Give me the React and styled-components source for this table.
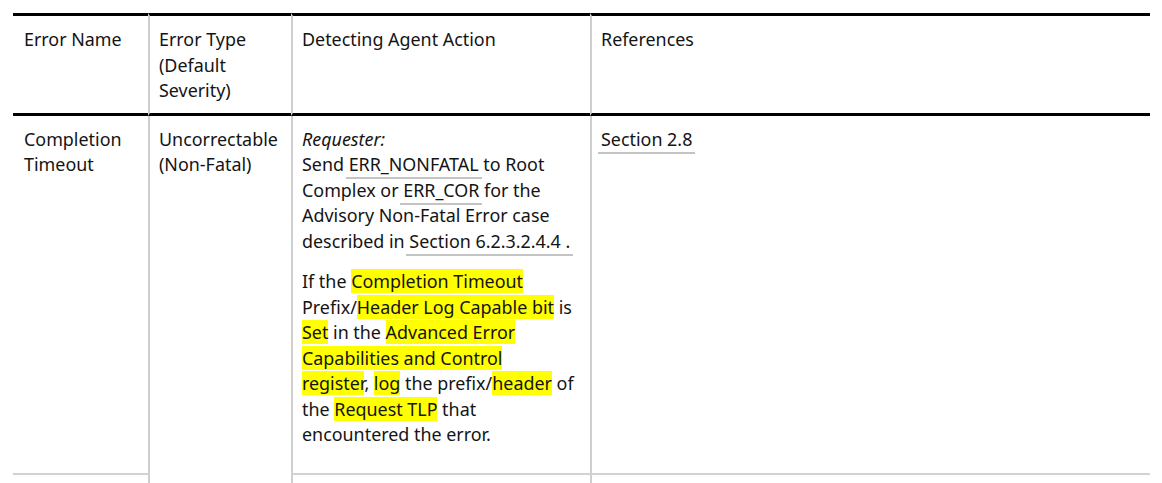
import React from 'react';
import styled, { createGlobalStyle } from 'styled-components';

const GlobalStyle = createGlobalStyle`
  body {
    margin: 0;
    background: #fff;
    overflow: hidden;
    font-family: "Noto Sans", "Liberation Sans", sans-serif;
  }
`;

const Page = styled.div`
  padding: 13px 12px 0 13px;
`;

const Table = styled.table`
  width: 1137px;
  table-layout: fixed;
  border-collapse: separate;
  border-spacing: 0;
  color: #141414;
  font-size: 17.9px;
  line-height: 25.5px;
`;

const HeadCell = styled.th`
  text-align: left;
  vertical-align: top;
  font-weight: normal;
  padding: 11px 10px 9px ${props => (props.first ? '11px' : '9px')};
  border-top: 3px solid #000;
  border-bottom: 3px solid #000;
  border-left: ${props => (props.first ? 'none' : '2px solid #cfcfcf')};
`;

const Cell = styled.td`
  vertical-align: top;
  padding: 11px 10px 10px ${props => (props.first ? '11px' : '9px')};
  border-bottom: ${props => (props.open ? 'none' : '2px solid #d2d2d2')};
  border-left: ${props => (props.first ? 'none' : '2px solid #cfcfcf')};
  height: ${props => props.h || 'auto'};
`;

const Para = styled.p`
  margin: 0 0 15px;
`;

const Role = styled.em`
  font-style: italic;
`;

const Ref = styled.span`
  position: relative;
  white-space: nowrap;

  &::after {
    content: '';
    position: absolute;
    left: -3px;
    right: -3px;
    bottom: -3px;
    height: 2px;
    background: #c4c4c4;
  }
`;

const Mark = styled.span`
  background: #ffff00;
`;

const columns = [
  { label: 'Error Name', width: 135 },
  { label: 'Error Type (Default Severity)', width: 143 },
  { label: 'Detecting Agent Action', width: 299 },
  { label: 'References', width: 560 },
];

const App = () => (
  <Page>
    <GlobalStyle />
    <Table>
      <colgroup>
        {columns.map(col => (
          <col key={col.label} style={{ width: col.width }} />
        ))}
      </colgroup>
      <thead>
        <tr>
          {columns.map((col, i) => (
            <HeadCell key={col.label} first={i === 0}>
              {col.label}
            </HeadCell>
          ))}
        </tr>
      </thead>
      <tbody>
        <tr>
          <Cell first>Completion Timeout</Cell>
          <Cell rowSpan={2} open>Uncorrectable (Non-Fatal)</Cell>
          <Cell>
            <Para>
              <Role>Requester:</Role>
              <br />
              Send <Ref>ERR_NONFATAL</Ref> to Root
              <br />
              Complex or <Ref>ERR_COR</Ref> for the
              <br />
              Advisory Non-Fatal Error case
              <br />
              described in <Ref>Section 6.2.3.2.4.4&nbsp;.</Ref>
            </Para>
            <Para>
              If the <Mark>Completion Timeout</Mark>
              <br />
              Prefix/<Mark>Header Log Capable bit</Mark> is
              <br />
              <Mark>Set</Mark> in the <Mark>Advanced Error</Mark>
              <br />
              <Mark>Capabilities and Control</Mark>
              <br />
              <Mark>register</Mark>, <Mark>log</Mark> the prefix/<Mark>header</Mark> of
              <br />
              the <Mark>Request TLP</Mark> that
              <br />
              encountered the error.
            </Para>
          </Cell>
          <Cell>
            <Ref>Section 2.8</Ref>
          </Cell>
        </tr>
        <tr>
          <Cell first h="60px" />
          <Cell />
          <Cell />
        </tr>
      </tbody>
    </Table>
  </Page>
);

export default App;
